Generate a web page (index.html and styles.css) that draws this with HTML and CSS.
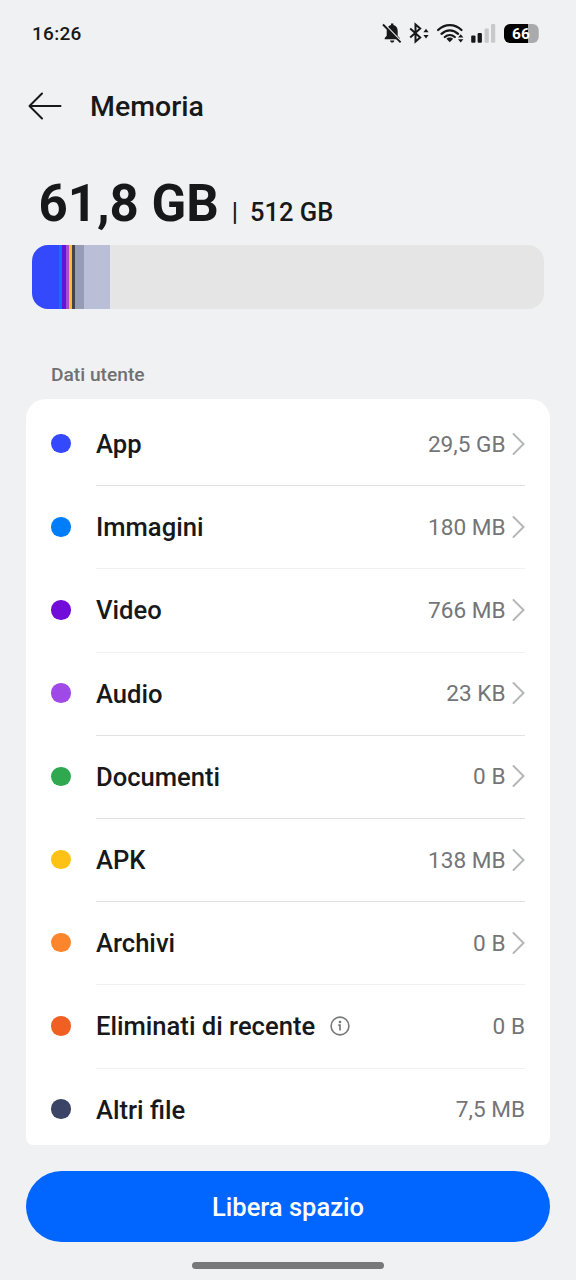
FILE: index.html
```html
<!DOCTYPE html>
<html lang="it">
<head>
<meta charset="utf-8">
<title>Memoria</title>
<link rel="stylesheet" href="styles.css">
</head>
<body>
<div class="screen">
  <div class="status">
    <span class="time">16:26</span>
    <svg class="status-icons" width="157" height="26" viewBox="0 0 157 26">
      <g transform="translate(-.8 1)">
        <path fill="#17181a" d="M3.500 18.200v-1.100l2-2.300V10c0-3.200 1.700-5.400 4.300-6V2.400h2.400V4c2.600.6 4.300 2.800 4.300 6v4.800l2 2.300v1.100zM8.900 19.400h4.200c0 1.200-.9 2.100-2.100 2.100s-2.100-.9-2.100-2.100z"/>
        <path d="M3 3.200l17.200 17.700" stroke="#eff1f3" stroke-width="2"/>
        <path d="M1.800 3.500l17.600 17.900" stroke="#17181a" stroke-width="1.900"/>
      </g>
      <g transform="translate(-6.800 0)">
        <g fill="#17181a">
          <path d="M48.200 12.200h5.200l-2.600-3.400zM48.200 15h5.200l-2.600 3.400z"/>
          <path d="M71.200 18.700c1.700-1.700 5-1.700 6.700 0l-3.300 3.500z"/>
          <path d="M82.800 17.500h5.400l-2.700-3.200zM82.800 19.300h5.400l-2.700 3.200z"/>
          <rect x="96" y="15.500" width="4.300" height="7.200" rx="1"/>
          <rect x="102.400" y="13" width="4.300" height="9.700" rx="1"/>
        </g>
        <path d="M35 8.500l10 9-4.700 4V4.500l4.700 4-10 9" fill="none" stroke="#17181a" stroke-width="2"/>
        <g fill="none" stroke="#17181a" stroke-width="2.300" stroke-linecap="round">
          <path d="M62.900 10c6.800-6.500 16.600-6.500 23.400 0"/>
          <path d="M66.300 13.800c5-4.700 11.600-4.700 16.600 0"/>
          <path d="M69.600 17c3-2.600 7-2.600 10 0"/>
        </g>
        <g fill="#c8c9cb">
          <rect x="109.400" y="8.500" width="4.200" height="14.200" rx="1"/>
          <rect x="115.800" y="4" width="4.200" height="18.700" rx="1"/>
        </g>
        <path d="M134.800 4h18v19h-18a6 6 0 0 1-6-6v-7a6 6 0 0 1 6-6z" fill="#000"/>
        <path d="M152.800 4h4.700a6 6 0 0 1 6 6v7a6 6 0 0 1-6 6h-4.700z" fill="#a9aaab"/>
        <text class="battery-level" x="145.700" y="19">66</text>
      </g>
    </svg>
  </div>

  <header class="header">
    <svg class="back" width="36" height="30" viewBox="0 0 36 30" fill="none" stroke="#17181a" stroke-width="2" stroke-linecap="round" stroke-linejoin="round">
      <path d="M33.500 15H2.500M15 2.500L2.500 15 15 27.500"/>
    </svg>
    <h1 class="title">Memoria</h1>
  </header>

  <div class="usage">
    <span class="used">61,8 GB</span>
    <span class="separator">|</span>
    <span class="total">512 GB</span>
  </div>
  <div class="bar">
    <i class="seg seg-app"></i><i class="seg seg-images"></i><i class="seg seg-video"></i><i class="seg seg-audio"></i><i class="seg seg-apk"></i><i class="seg seg-other"></i><i class="seg seg-system"></i><i class="seg seg-os"></i>
  </div>

  <h2 class="section">Dati utente</h2>
  <ul class="card">
    <li class="row"><i class="dot app"></i><div class="cell"><span class="name">App</span><span class="value">29,5 GB</span><svg class="chevron" viewBox="0 0 13 24"><path d="M1.500 2l10 10-10 10"/></svg></div></li>
    <li class="row"><i class="dot images"></i><div class="cell light"><span class="name">Immagini</span><span class="value">180 MB</span><svg class="chevron" viewBox="0 0 13 24"><path d="M1.500 2l10 10-10 10"/></svg></div></li>
    <li class="row"><i class="dot video"></i><div class="cell light"><span class="name">Video</span><span class="value">766 MB</span><svg class="chevron" viewBox="0 0 13 24"><path d="M1.500 2l10 10-10 10"/></svg></div></li>
    <li class="row"><i class="dot audio"></i><div class="cell"><span class="name">Audio</span><span class="value">23 KB</span><svg class="chevron" viewBox="0 0 13 24"><path d="M1.500 2l10 10-10 10"/></svg></div></li>
    <li class="row"><i class="dot documents"></i><div class="cell"><span class="name">Documenti</span><span class="value">0 B</span><svg class="chevron" viewBox="0 0 13 24"><path d="M1.500 2l10 10-10 10"/></svg></div></li>
    <li class="row"><i class="dot apk"></i><div class="cell"><span class="name">APK</span><span class="value">138 MB</span><svg class="chevron" viewBox="0 0 13 24"><path d="M1.500 2l10 10-10 10"/></svg></div></li>
    <li class="row"><i class="dot archives"></i><div class="cell light"><span class="name">Archivi</span><span class="value">0 B</span><svg class="chevron" viewBox="0 0 13 24"><path d="M1.500 2l10 10-10 10"/></svg></div></li>
    <li class="row"><i class="dot deleted"></i><div class="cell light"><span class="name">Eliminati di recente</span><svg class="info" viewBox="0 0 20 20"><circle cx="10" cy="10" r="8.900" fill="none" stroke="#77787a" stroke-width="1.600"/><circle cx="10" cy="6" r="1.300" fill="#77787a"/><path d="M8.300 9.200H10v5.300" fill="none" stroke="#77787a" stroke-width="1.700"/></svg><span class="value">0 B</span></div></li>
    <li class="row"><i class="dot other"></i><div class="cell"><span class="name">Altri file</span><span class="value">7,5 MB</span></div></li>
  </ul>

  <button class="action" type="button">Libera spazio</button>
  <div class="home-indicator"></div>
</div>
</body>
</html>
```
FILE: styles.css
```css
* {
  box-sizing: border-box;
}

body {
  margin: 0;
  background: #eff1f3;
  color: #17181a;
  font-family: Roboto, "Liberation Sans", sans-serif;
}

.screen {
  display: flex;
  flex-direction: column;
  height: 1280px;
  overflow: hidden;
}

.status {
  display: flex;
  justify-content: space-between;
  align-items: center;
  height: 66px;
  padding: 0 37px 0 32px;
}

.time {
  font-size: 19px;
  font-weight: 500;
  letter-spacing: 0.300px;
}

.status-icons {
  width: 157px;
}

.battery-level {
  fill: #fff;
  font-size: 15.500px;
  font-weight: 700;
  text-anchor: middle;
}

.header {
  display: flex;
  align-items: center;
  gap: 27px;
  height: 80px;
  padding-left: 27px;
}

.title {
  margin: 1px 0 0;
  font-size: 28.500px;
  font-weight: 500;
  line-height: 34px;
}

.usage {
  display: flex;
  align-items: baseline;
  height: 99px;
  padding: 28px 0 0 38.500px;
  line-height: 60px;
}

.used {
  font-size: 51px;
  font-weight: 700;
}

.separator {
  margin-left: 13px;
  font-size: 25px;
  font-weight: 500;
}

.total {
  margin-left: 12px;
  font-size: 25.500px;
  font-weight: 500;
}

.bar {
  display: flex;
  height: 64px;
  margin: 0 32px;
  overflow: hidden;
  border-radius: 16px;
  background: #e5e5e5;
}

.seg { width: 3px; }
.seg-app { width: 27px; background: #3549fc; }
.seg-images { background: #0a72fb; }
.seg-video { width: 4px; background: #6414d6; }
.seg-audio { background: #a94bd5; }
.seg-apk { background: #fbb936; }
.seg-other { background: #42434b; }
.seg-system { width: 9px; background: #969bb6; }
.seg-os { width: 26px; background: #babed6; }

.section {
  margin: 52px 0 10px 51px;
  color: #6f7072;
  font-size: 19.200px;
  font-weight: 500;
  line-height: 28px;
}

.card {
  flex: none;
  height: 746px;
  margin: 0 26px;
  padding: 4px 25px 0;
  overflow: hidden;
  border-radius: 20px 20px 7px 7px;
  background: #fff;
  list-style: none;
}

.row {
  display: flex;
  align-items: center;
  gap: 26px;
  height: 83.200px;
}

.dot {
  flex: none;
  width: 19.500px;
  height: 19.500px;
  margin: 0 -0.500px 2px 0;
  border-radius: 50%;
}

.app { background: #3549fc; }
.images { background: #007df9; }
.video { background: #720dd9; }
.audio { background: #9f4ae6; }
.documents { background: #30a850; }
.apk { background: #fdc215; }
.archives { background: #fd862d; }
.deleted { background: #f06022; }
.other { background: #3b4467; }

.cell {
  display: flex;
  flex: 1;
  align-items: center;
  height: 100%;
  border-bottom: 1px solid #e2e2e2;
}

.light {
  border-bottom-color: #f1f1f1;
}

.row:last-child .cell {
  border-bottom-color: transparent;
}

.name {
  font-size: 25.600px;
  font-weight: 500;
}

.value {
  margin-left: auto;
  color: #747577;
  font-size: 22.600px;
}

.chevron {
  width: 13px;
  height: 24px;
  margin: 0 0 1px 6.500px;
  fill: none;
  stroke: #b5b6b7;
  stroke-width: 2;
  stroke-linecap: round;
}

.info {
  width: 20px;
  height: 20px;
  margin-left: 14.500px;
}

.action {
  flex: none;
  height: 71px;
  margin: 26px 26px 0;
  padding: 1px 0 0;
  border: 0;
  border-radius: 36px;
  background: #0066ff;
  color: #fff;
  font: 500 25.500px Roboto, "Liberation Sans", sans-serif;
}

.home-indicator {
  width: 192px;
  height: 7px;
  margin: 20px auto 0;
  border-radius: 4px;
  background: #77787a;
}
```
